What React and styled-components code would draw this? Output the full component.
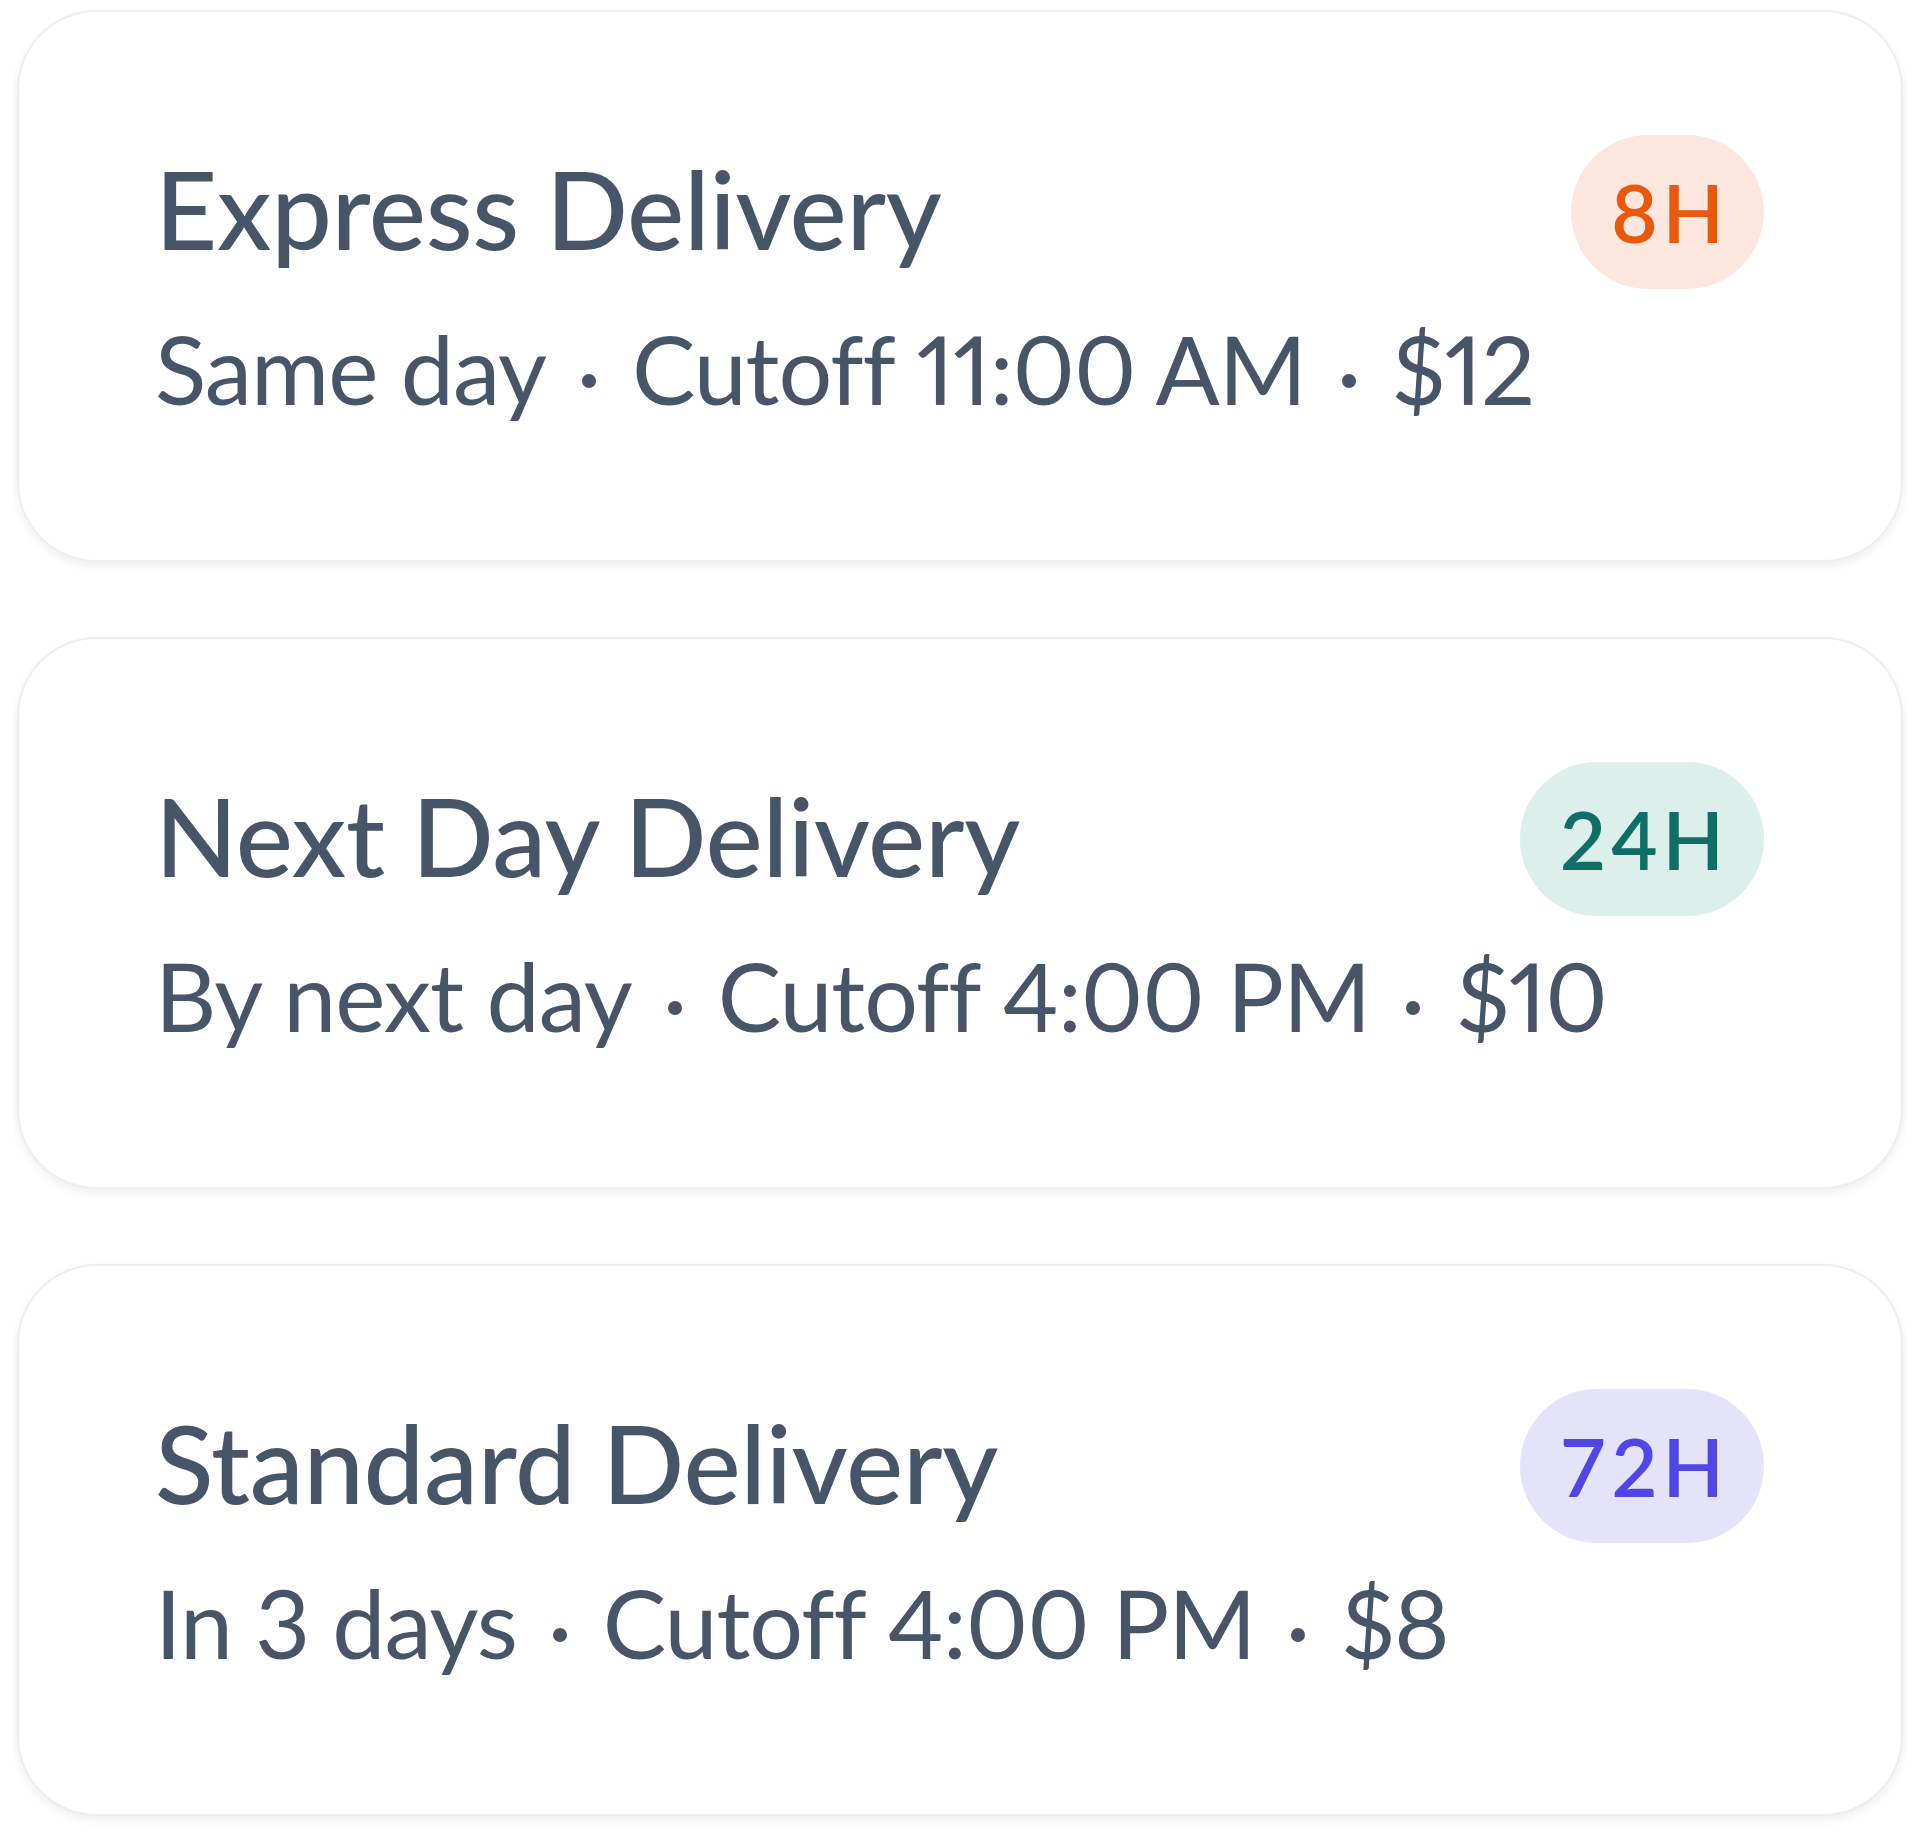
import React from 'react'
import styled, { createGlobalStyle } from 'styled-components'

const GlobalStyle = createGlobalStyle`
  html, body {
    margin: 0;
    padding: 0;
    background: #ffffff;
  }
  body {
    font-family: Lato, "Liberation Sans", sans-serif;
  }
`

const tones = {
  orange: { bg: '#fde6dd', fg: '#ea580c' },
  teal: { bg: '#dcefeb', fg: '#0f6f66' },
  indigo: { bg: '#e5e3fa', fg: '#4f46e5' },
}

const List = styled.div`
  display: flex;
  flex-direction: column;
  gap: 75px;
  padding: 10px 17px 20px 17px;
`

const Card = styled.div`
  box-sizing: border-box;
  height: 552px;
  padding: 123px 137px 0 136px;
  background: #ffffff;
  border: 2.5px solid #eceef1;
  border-radius: 80px;
  box-shadow: 0 4px 8px rgba(15, 23, 42, 0.07);
`

const Header = styled.div`
  display: flex;
  align-items: center;
  justify-content: space-between;
  height: 154px;
`

const Title = styled.h2`
  margin: 0 0 8px 0;
  font-family: Lato, "Liberation Sans", sans-serif;
  font-weight: 500;
  font-size: 108px;
  line-height: 1;
  color: #475569;
  letter-spacing: -0.3px;
`

const Badge = styled.span`
  display: inline-flex;
  align-items: center;
  justify-content: center;
  box-sizing: border-box;
  height: 154px;
  padding: 0 35px 0 40px;
  border-radius: 77px;
  background: ${p => tones[p.$tone].bg};
  color: ${p => tones[p.$tone].fg};
  font-family: Lato, "Liberation Sans", sans-serif;
  font-weight: 600;
  font-size: 80px;
  letter-spacing: 5px;
`

const Meta = styled.p`
  margin: 22px 0 0 0;
  font-family: Lato, "Liberation Sans", sans-serif;
  font-weight: 400;
  font-size: 95px;
  line-height: 1.2;
  color: #475569;
  letter-spacing: -1px;
  font-variant-numeric: proportional-nums;
`

const Dot = styled.span`
  display: inline-block;
  width: 14px;
  height: 14px;
  margin: 0 36px;
  border-radius: 50%;
  background: currentColor;
  vertical-align: middle;
`

const options = [
  { title: 'Express Delivery', badge: '8H', tone: 'orange', meta: ['Same day', 'Cutoff 11:00 AM', '$12'] },
  { title: 'Next Day Delivery', badge: '24H', tone: 'teal', meta: ['By next day', 'Cutoff 4:00 PM', '$10'] },
  { title: 'Standard Delivery', badge: '72H', tone: 'indigo', meta: ['In 3 days', 'Cutoff 4:00 PM', '$8'] },
]

export default function App() {
  return (
    <>
      <GlobalStyle />
      <List>
        {options.map(o => (
          <Card key={o.title}>
            <Header>
              <Title>{o.title}</Title>
              <Badge $tone={o.tone}>{o.badge}</Badge>
            </Header>
            <Meta>
              {o.meta.map((part, i) => (
                <React.Fragment key={part}>
                  {i > 0 && <Dot />}
                  {part}
                </React.Fragment>
              ))}
            </Meta>
          </Card>
        ))}
      </List>
    </>
  )
}
